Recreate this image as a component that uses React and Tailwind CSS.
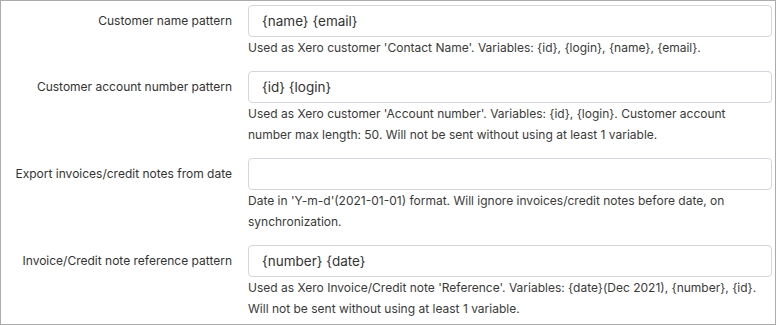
const fields = [
  {
    label: "Customer name pattern",
    value: "{name} {email}",
    help: "Used as Xero customer 'Contact Name'. Variables: {id}, {login}, {name}, {email}.",
  },
  {
    label: "Customer account number pattern",
    value: "{id} {login}",
    help: "Used as Xero customer 'Account number'. Variables: {id}, {login}. Customer account number max length: 50. Will not be sent without using at least 1 variable.",
  },
  {
    label: "Export invoices/credit notes from date",
    value: "",
    help: "Date in 'Y-m-d'(2021-01-01) format. Will ignore invoices/credit notes before date, on synchronization.",
  },
  {
    label: "Invoice/Credit note reference pattern",
    value: "{number} {date}",
    help: "Used as Xero Invoice/Credit note 'Reference'. Variables: {date}(Dec 2021), {number}, {id}. Will not be sent without using at least 1 variable.",
  },
];

export default function App() {
  return (
    <div className="w-[776px] h-[325px] border border-[#ababab] bg-white pt-[4px] overflow-hidden font-['Inter',sans-serif]">
      {fields.map((f) => (
        <div key={f.label} className="flex mb-[13px]">
          <div className="w-[231px] shrink-0 whitespace-nowrap text-right text-[12px] leading-[32px] text-[#333]">
            {f.label}
          </div>
          <div className="ml-[16px] w-[524px]">
            <input
              readOnly
              value={f.value}
              className="block w-full h-[32px] rounded-[4px] border border-[#d3d6da] px-[13px] text-[13.5px] text-[#333] outline-none"
            />
            <p className="text-[12px] leading-[21px] text-[#3a3a3a]">{f.help}</p>
          </div>
        </div>
      ))}
    </div>
  );
}
